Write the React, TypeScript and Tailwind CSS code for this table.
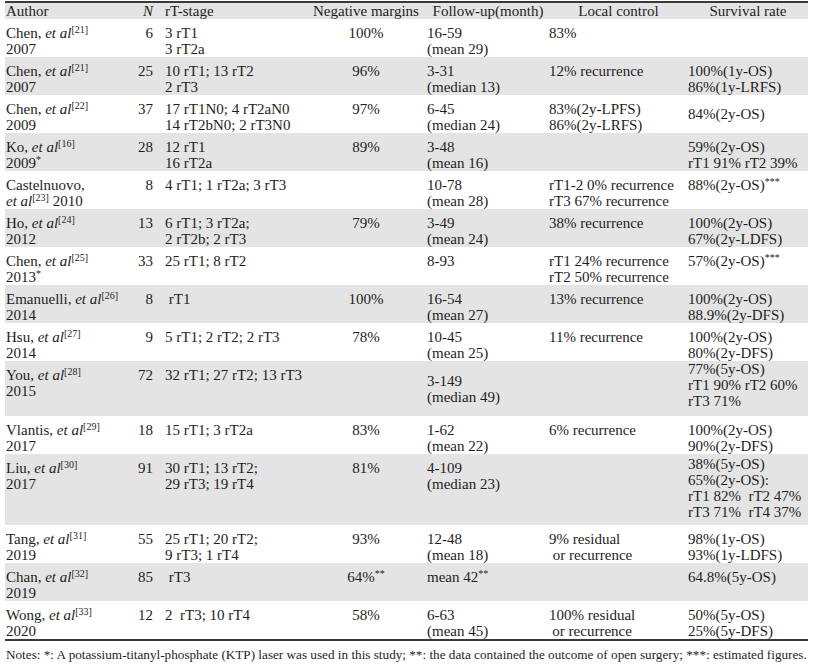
import React, { ReactNode } from 'react';

const Sup = ({ children }: { children: ReactNode }) => (
  <sup className="text-[10px] leading-none top-[-5px]">{children}</sup>
);

const EtAl = ({ r }: { r: number }) => (
  <>
    <i>et al</i>
    <Sup>[{r}]</Sup>
  </>
);

type RowProps = {
  shade?: boolean;
  h?: string;
  author: ReactNode;
  n: number;
  stage: ReactNode;
  neg?: ReactNode;
  fu: ReactNode;
  lc?: ReactNode;
  sr?: ReactNode;
  fuCls?: string;
  srCls?: string;
};

const top = 'align-top pt-[6px] pb-0';

const Row = ({ shade, h, author, n, stage, neg, fu, lc, sr, fuCls, srCls }: RowProps) => (
  <tr className={`${h ?? 'h-[38px]'} ${shade ? 'bg-[#e4e4e4]' : 'bg-white'}`}>
    <td className={`${top} pl-[1px]`}>{author}</td>
    <td className={`${top} text-right`}>{n}</td>
    <td className={`${top} pl-[12px]`}>{stage}</td>
    <td className={`${top} text-center`}>{neg}</td>
    <td className={fuCls ?? top}>{fu}</td>
    <td className={top}>{lc}</td>
    <td className={srCls ?? top}>{sr}</td>
  </tr>
);

export default function App() {
  return (
    <div className="w-[818px] h-[668px] bg-white text-[#1e1e1e] text-[15px] leading-[16px] font-['Liberation_Serif','Times_New_Roman',serif]">
      <div className="pt-[1px] pl-[5px]">
        <table className="w-[803px] table-fixed border-t-2 border-b-2 border-[#3a3a3a]">
          <colgroup>
            <col className="w-[130px]" />
            <col className="w-[18px]" />
            <col className="w-[152px]" />
            <col className="w-[122px]" />
            <col className="w-[122px]" />
            <col className="w-[139px]" />
            <col className="w-[120px]" />
          </colgroup>
          <thead>
            <tr className="h-[16px] bg-[#e4e4e4]">
              <th className="font-normal text-left pl-[1px] p-0">Author</th>
              <th className="font-normal text-right italic p-0">N</th>
              <th className="font-normal text-left pl-[12px] p-0">rT-stage</th>
              <th className="font-normal text-center p-0">Negative margins</th>
              <th className="font-normal text-center p-0">Follow-up(month)</th>
              <th className="font-normal text-center p-0">Local control</th>
              <th className="font-normal text-center p-0">Survival rate</th>
            </tr>
          </thead>
          <tbody>
            <Row
              author={<>Chen, <EtAl r={21} /><br />2007</>}
              n={6}
              stage={<>3 rT1<br />3 rT2a</>}
              neg="100%"
              fu={<>16-59<br />(mean 29)</>}
              lc="83%"
            />
            <Row
              shade
              author={<>Chen, <EtAl r={21} /><br />2007</>}
              n={25}
              stage={<>10 rT1; 13 rT2<br />2 rT3</>}
              neg="96%"
              fu={<>3-31<br />(median 13)</>}
              lc="12% recurrence"
              sr={<>100%(1y-OS)<br />86%(1y-LRFS)</>}
            />
            <Row
              author={<>Chen, <EtAl r={22} /><br />2009</>}
              n={37}
              stage={<>17 rT1N0; 4 rT2aN0<br />14 rT2bN0; 2 rT3N0</>}
              neg="97%"
              fu={<>6-45<br />(median 24)</>}
              lc={<>83%(2y-LPFS)<br />86%(2y-LRFS)</>}
              sr="84%(2y-OS)"
              srCls="align-middle py-0"
            />
            <Row
              shade
              author={<>Ko, <EtAl r={16} /><br />2009<Sup>*</Sup></>}
              n={28}
              stage={<>12 rT1<br />16 rT2a</>}
              neg="89%"
              fu={<>3-48<br />(mean 16)</>}
              sr={<>59%(2y-OS)<br />rT1 91% rT2 39%</>}
            />
            <Row
              author={<>Castelnuovo,<br /><EtAl r={23} /> 2010</>}
              n={8}
              stage="4 rT1; 1 rT2a; 3 rT3"
              fu={<>10-78<br />(mean 28)</>}
              lc={<>rT1-2 0% recurrence<br />rT3 67% recurrence</>}
              sr={<>88%(2y-OS)<Sup>***</Sup></>}
            />
            <Row
              shade
              author={<>Ho, <EtAl r={24} /><br />2012</>}
              n={13}
              stage={<>6 rT1; 3 rT2a;<br />2 rT2b; 2 rT3</>}
              neg="79%"
              fu={<>3-49<br />(mean 24)</>}
              lc="38% recurrence"
              sr={<>100%(2y-OS)<br />67%(2y-LDFS)</>}
            />
            <Row
              author={<>Chen, <EtAl r={25} /><br />2013<Sup>*</Sup></>}
              n={33}
              stage="25 rT1; 8 rT2"
              fu="8-93"
              lc={<>rT1 24% recurrence<br />rT2 50% recurrence</>}
              sr={<>57%(2y-OS)<Sup>***</Sup></>}
            />
            <Row
              shade
              author={<>Emanuelli, <EtAl r={26} /><br />2014</>}
              n={8}
              stage={'\u00a0rT1'}
              neg="100%"
              fu={<>16-54<br />(mean 27)</>}
              lc="13% recurrence"
              sr={<>100%(2y-OS)<br />88.9%(2y-DFS)</>}
            />
            <Row
              author={<>Hsu, <EtAl r={27} /><br />2014</>}
              n={9}
              stage="5 rT1; 2 rT2; 2 rT3"
              neg="78%"
              fu={<>10-45<br />(mean 25)</>}
              lc="11% recurrence"
              sr={<>100%(2y-OS)<br />80%(2y-DFS)</>}
            />
            <Row
              shade
              h="h-[55px]"
              author={<>You, <EtAl r={28} /><br />2015</>}
              n={72}
              stage="32 rT1; 27 rT2; 13 rT3"
              fu={<>3-149<br />(median 49)</>}
              fuCls="align-middle py-0"
              sr={<>77%(5y-OS)<br />rT1 90% rT2 60%<br />rT3 71%</>}
              srCls="align-top pt-0 pb-0"
            />
            <Row
              author={<>Vlantis, <EtAl r={29} /><br />2017</>}
              n={18}
              stage="15 rT1; 3 rT2a"
              neg="83%"
              fu={<>1-62<br />(mean 22)</>}
              lc="6% recurrence"
              sr={<>100%(2y-OS)<br />90%(2y-DFS)</>}
            />
            <Row
              shade
              h="h-[71px]"
              author={<>Liu, <EtAl r={30} /><br />2017</>}
              n={91}
              stage={<>30 rT1; 13 rT2;<br />29 rT3; 19 rT4</>}
              neg="81%"
              fu={<>4-109<br />(median 23)</>}
              sr={<>38%(5y-OS)<br />65%(2y-OS):<br />rT1 82%{'\u00a0'} rT2 47%<br />rT3 71%{'\u00a0'} rT4 37%</>}
              srCls="align-top pt-[2px] pb-0"
            />
            <Row
              author={<>Tang, <EtAl r={31} /><br />2019</>}
              n={55}
              stage={<>25 rT1; 20 rT2;<br />9 rT3; 1 rT4</>}
              neg="93%"
              fu={<>12-48<br />(mean 18)</>}
              lc={<>9% residual<br />{'\u00a0'}or recurrence</>}
              sr={<>98%(1y-OS)<br />93%(1y-LDFS)</>}
            />
            <Row
              shade
              author={<>Chan, <EtAl r={32} /><br />2019</>}
              n={85}
              stage={'\u00a0rT3'}
              neg={<>64%<Sup>**</Sup></>}
              fu={<>mean 42<Sup>**</Sup></>}
              sr="64.8%(5y-OS)"
            />
            <Row
              author={<>Wong, <EtAl r={33} /><br />2020</>}
              n={12}
              stage={'2\u00a0 rT3; 10 rT4'}
              neg="58%"
              fu={<>6-63<br />(mean 45)</>}
              lc={
                <span className="inline-block text-center">
                  100% residual<br />or recurrence
                </span>
              }
              sr={<>50%(5y-OS)<br />25%(5y-DFS)</>}
            />
          </tbody>
        </table>
        <p className="mt-[6px] text-[13.2px] leading-[16px] pl-[1px] whitespace-nowrap">
          Notes: *: A potassium-titanyl-phosphate (KTP) laser was used in this study; **: the data contained the outcome of open surgery; ***: estimated figures.
        </p>
      </div>
    </div>
  );
}
